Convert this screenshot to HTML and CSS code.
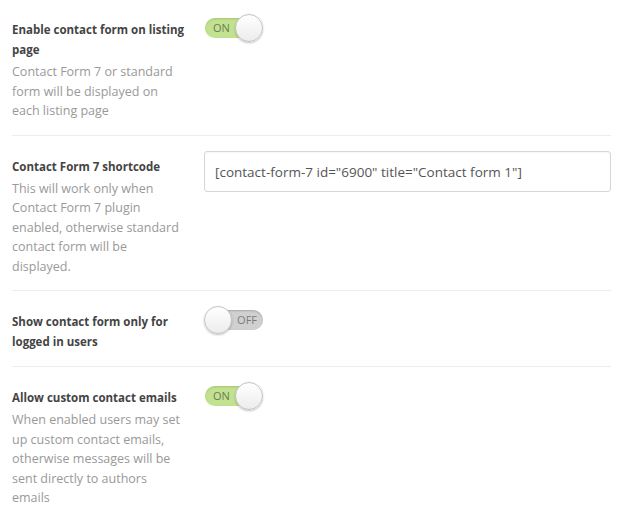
FILE: index.html
```html
<!DOCTYPE html>
<html lang="en">
<head>
<meta charset="utf-8">
<title>Contact form settings</title>
<link rel="stylesheet" href="styles.css">
</head>
<body>
<div class="settings">
  <div class="row first">
    <div class="label">
      <div class="title">Enable contact form on listing page</div>
      <div class="desc">Contact Form 7 or standard form will be displayed on each listing page</div>
    </div>
    <div class="control">
      <div class="switch on"><span class="track"><span class="state">ON</span></span><span class="knob"></span></div>
    </div>
  </div>
  <div class="row">
    <div class="label">
      <div class="title">Contact Form 7 shortcode</div>
      <div class="desc">This will work only when Contact Form 7 plugin enabled, otherwise standard contact form will be displayed.</div>
    </div>
    <div class="control">
      <input class="text-input" type="text" value="[contact-form-7 id=&quot;6900&quot; title=&quot;Contact form 1&quot;]">
    </div>
  </div>
  <div class="row">
    <div class="label">
      <div class="title">Show contact form only for logged in users</div>
    </div>
    <div class="control">
      <div class="switch off"><span class="track"><span class="state">OFF</span></span><span class="knob"></span></div>
    </div>
  </div>
  <div class="row last">
    <div class="label">
      <div class="title">Allow custom contact emails</div>
      <div class="desc">When enabled users may set up custom contact emails, otherwise messages will be sent directly to authors emails</div>
    </div>
    <div class="control">
      <div class="switch on"><span class="track"><span class="state">ON</span></span><span class="knob"></span></div>
    </div>
  </div>
</div>
</body>
</html>
```
FILE: styles.css
```css
html, body {
  margin: 0;
  padding: 0;
  background: #ffffff;
}
body {
  font-family: "Open Sans", "Noto Sans", sans-serif;
  color: #444;
}
.settings {
  padding: 0 11px 0 12px;
}
.row {
  display: grid;
  grid-template-columns: 172px 1fr;
  column-gap: 20px;
  padding: 15px 0 14px;
  border-bottom: 1px solid #ececec;
}
.row.first {
  padding-top: 14px;
}
.row.last {
  border-bottom: none;
}
.label {
  padding-top: 6px;
}
.title {
  font-size: 11.5px;
  font-weight: 700;
  line-height: 20px;
  color: #444;
}
.desc {
  margin-top: 2px;
  font-size: 12.5px;
  line-height: 19.5px;
  color: #999;
}
.control {
  display: flex;
  align-items: flex-start;
}
.switch {
  position: relative;
  width: 59px;
  height: 28px;
  flex: none;
}
.track {
  position: absolute;
  top: 4px;
  height: 20px;
  border-radius: 10px;
  display: flex;
  align-items: center;
  box-sizing: border-box;
}
.switch.on .track {
  left: 1px;
  right: 2px;
  background: #c2e28f;
  box-shadow: inset 0 1px 2px rgba(80, 120, 30, 0.25);
  padding-left: 8px;
}
.switch.off .track {
  left: 2px;
  right: 0;
  background: #d0d0d0;
  box-shadow: inset 0 1px 2px rgba(0, 0, 0, 0.2);
  justify-content: flex-end;
  padding-right: 6px;
}
.state {
  font-size: 11px;
  line-height: 20px;
}
.switch.on .state {
  color: #6a7b56;
}
.switch.off .state {
  color: #7c7c7c;
}
.knob {
  position: absolute;
  top: 0;
  width: 28px;
  height: 28px;
  border-radius: 50%;
  box-sizing: border-box;
  border: 1px solid #c4c4c4;
  background: linear-gradient(#ffffff, #ececec);
  box-shadow: 0 1px 2px rgba(0, 0, 0, 0.25);
}
.switch.on .knob {
  right: 0;
}
.switch.off .knob {
  left: 0;
}
.text-input {
  width: 100%;
  height: 41px;
  margin-top: 0.5px;
  box-sizing: border-box;
  border: 1px solid #d6d6d6;
  border-radius: 3px;
  padding: 0 10px;
  font-family: "Open Sans", "Noto Sans", sans-serif;
  font-size: 13.5px;
  color: #555;
  background: #fff;
  box-shadow: inset 0 1px 2px rgba(0, 0, 0, 0.04);
  outline: none;
}
```
